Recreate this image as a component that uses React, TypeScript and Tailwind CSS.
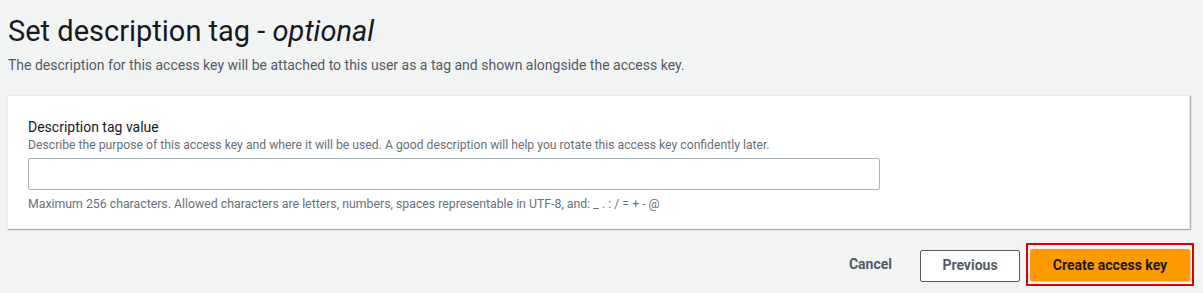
export default function App() {
  return (
    <div
      className="w-[1203px] h-[293px] overflow-hidden bg-[#f2f3f3] text-[#16191f]"
      style={{ fontFamily: "Roboto, 'Open Sans', Arial, sans-serif" }}
    >
      {/* Header */}
      <div className="pl-2 pt-[13px]">
        <h1 className="text-[29px] leading-[36px] font-normal">
          Set description tag - <span className="italic">optional</span>
        </h1>
        <p className="mt-[7px] text-[14px] leading-[18px] text-[#545b64]">
          The description for this access key will be attached to this user as a tag and shown alongside the access key.
        </p>
      </div>

      {/* Card */}
      <div className="ml-[7px] mr-[13px] mt-[21px] h-[134px] bg-white border border-[#eaeded] shadow-[1px_1px_1px_0_rgba(0,28,36,0.3)] px-5 pt-[21px]">
        <label className="block text-[14px] leading-[20px]">Description tag value</label>
        <p className="text-[12.2px] leading-[16px] text-[#687078]">
          Describe the purpose of this access key and where it will be used. A good description will help you rotate this access key confidently later.
        </p>
        <input
          type="text"
          className="mt-[5px] block w-[852px] h-[32px] border border-[#aab7b8] rounded-[2px] bg-white outline-none"
        />
        <p className="mt-[6px] text-[12.3px] leading-[16px] text-[#687078]">
          Maximum 256 characters. Allowed characters are letters, numbers, spaces representable in UTF-8, and: _ . : / = + - @
        </p>
      </div>

      {/* Actions */}
      <div className="flex items-center justify-end pr-[9px] mt-[14px]">
        <button className="text-[14px] font-bold text-[#545b64] px-5 h-[32px]">Cancel</button>
        <button className="ml-[8px] mt-[2px] w-[100px] h-[32px] border border-[#545b64] rounded-[2px] bg-white text-[14px] font-bold text-[#545b64]">
          Previous
        </button>
        <div className="ml-[6px] border-2 border-[#e00000] px-[2px] pt-[4px] pb-[3px]">
          <button className="block w-[160px] h-[32px] rounded-[2px] bg-[#ff9900] text-[14px] font-bold text-[#16191f] shadow-[1px_1px_1px_rgba(0,0,0,0.15)]">
            Create access key
          </button>
        </div>
      </div>
    </div>
  );
}
